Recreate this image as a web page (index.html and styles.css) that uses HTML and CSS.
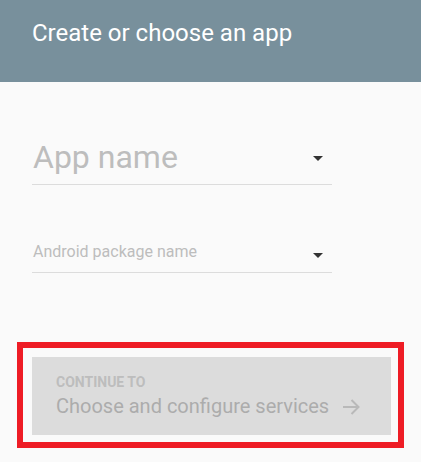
FILE: index.html
```html
<!DOCTYPE html>
<html>
<head>
<meta charset="utf-8">
<link rel="stylesheet" href="styles.css">
</head>
<body>
<header class="header">
  <h1 class="title">Create or choose an app</h1>
</header>
<main class="content">
  <div class="field field-large">
    <span class="placeholder">App name</span>
    <svg class="caret" width="10" height="5" viewBox="0 0 10 5"><path d="M0 0H10L5 5Z" fill="#333"/></svg>
  </div>
  <div class="field field-small">
    <span class="placeholder">Android package name</span>
    <svg class="caret" width="10" height="5" viewBox="0 0 10 5"><path d="M0 0H10L5 5Z" fill="#333"/></svg>
  </div>
  <div class="highlight">
    <div class="continue">
      <div class="continue-text">
        <div class="continue-label">CONTINUE TO</div>
        <div class="continue-target">Choose and configure services</div>
      </div>
      <svg class="arrow" width="17" height="16" viewBox="0 0 17 16"><path d="M0 8H15.5M8.5 1L15.5 8L8.5 15" fill="none" stroke="#b9b9b9" stroke-width="2"/></svg>
    </div>
  </div>
</main>
</body>
</html>
```
FILE: styles.css
```css
html, body {
  margin: 0;
  padding: 0;
}
body {
  background: #fafafa;
  font-family: Roboto, "Liberation Sans", sans-serif;
  width: 421px;
  height: 462px;
  overflow: hidden;
}
.header {
  background: #78909c;
  height: 82px;
  box-sizing: border-box;
  padding: 18px 32px 0;
}
.title {
  margin: 0;
  font-size: 24px;
  font-weight: 400;
  color: #ffffff;
  line-height: 30px;
}
.content {
  padding: 0 17px;
}
.field {
  margin-left: 15px;
  width: 300px;
  display: flex;
  align-items: flex-start;
  justify-content: space-between;
  border-bottom: 1px solid #dcdcdc;
}
.placeholder {
  color: #bdbdbd;
  padding-left: 1px;
}
.caret {
  margin-right: 9px;
  display: block;
}
.field-large {
  margin-top: 55px;
}
.field-large .placeholder {
  font-size: 32px;
  line-height: 40px;
  margin-bottom: 7px;
}
.field-large .caret {
  margin-top: 19px;
}
.field-small {
  margin-top: 57px;
}
.field-small .placeholder {
  font-size: 16px;
  line-height: 20px;
  margin-bottom: 10px;
}
.field-small .caret {
  margin-top: 11px;
}
.highlight {
  margin-top: 69px;
  border: 6px solid #ee1c25;
  padding: 9px 7px 7px 9px;
  width: 387px;
  box-sizing: border-box;
}
.continue {
  background: #dcdcdc;
  height: 78px;
  box-sizing: border-box;
  padding: 17px 24px 0 24px;
  display: flex;
  align-items: flex-start;
  gap: 14px;
}
.continue-label {
  font-size: 14px;
  font-weight: 700;
  color: #bdbdbd;
  line-height: 16px;
  margin-bottom: 3px;
}
.continue-target {
  font-size: 20px;
  color: #acacac;
  line-height: 26px;
}
.arrow {
  display: block;
  margin-top: 25px;
}
```
